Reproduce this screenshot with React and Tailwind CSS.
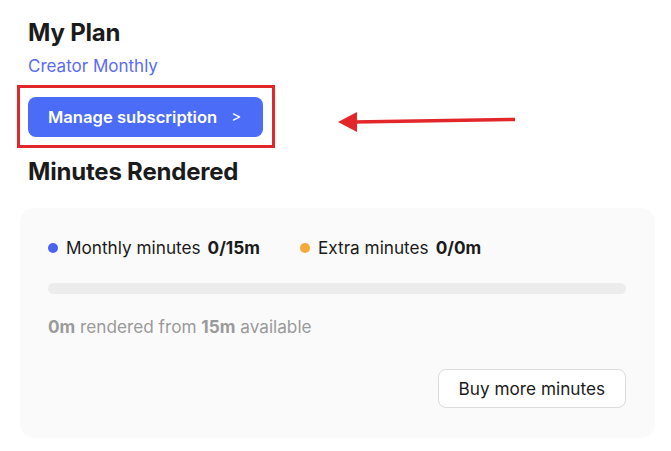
import React from "react";

export default function App() {
  return (
    <div className="relative w-[671px] h-[451px] bg-white text-[#1b1b1b] font-['Inter',sans-serif] overflow-hidden">
      <div className="pt-[17px] pl-[28px]">
        <h2 className="text-[24px] leading-[32px] font-bold tracking-[-0.2px]">My Plan</h2>
        <p className="mt-[6px] text-[17px] leading-[22px] text-[#5a6cf6]">Creator Monthly</p>

        <div className="relative mt-[20px] w-fit">
          <button className="flex items-center h-[40px] w-[235px] pl-[20px] rounded-[8px] bg-[#4a6cf7] text-white text-[16.6px] font-semibold">
            <span>Manage subscription</span>
            <span className="ml-[14px] text-[15px] font-normal">&gt;</span>
          </button>
          <div className="absolute left-[-11px] top-[-12px] w-[258px] h-[63px] border-[3px] border-[#e3262a]"></div>
        </div>

        <h2 className="mt-[19px] text-[24px] leading-[32px] font-bold tracking-[-0.2px]">Minutes Rendered</h2>
      </div>

      <svg className="absolute left-[336px] top-[110px]" width="182" height="24" viewBox="0 0 182 24">
        <line x1="18" y1="12" x2="179" y2="9.5" stroke="#e3262a" strokeWidth="3.5" />
        <polygon points="2,12 21,2 21,22" fill="#e3262a" />
      </svg>

      <div className="ml-[20px] mt-[20px] w-[635px] rounded-[14px] bg-[#fafafa] pl-[28px] pr-[29px] pt-[30px] pb-[30px]">
        <div className="flex items-center text-[17.2px] leading-[20px]">
          <span className="w-[10px] h-[10px] rounded-full bg-[#4a63f0]"></span>
          <span className="ml-[8px]">Monthly minutes</span>
          <span className="ml-[7px] font-bold">0/15m</span>
          <span className="ml-[40px] w-[10px] h-[10px] rounded-full bg-[#f4a93b]"></span>
          <span className="ml-[8px]">Extra minutes</span>
          <span className="ml-[7px] font-bold">0/0m</span>
        </div>

        <div className="mt-[25px] h-[11px] rounded-full bg-[#ececec]"></div>

        <p className="mt-[23px] text-[17.2px] leading-[20px] text-[#9a9a9a]">
          <span className="font-bold">0m</span> rendered from <span className="font-bold">15m</span> available
        </p>

        <div className="mt-[32px] flex justify-end">
          <button className="h-[39px] px-[20px] rounded-[8px] border border-[#dcdcdc] bg-white text-[17.2px] text-[#1b1b1b]">
            Buy more minutes
          </button>
        </div>
      </div>
    </div>
  );
}
